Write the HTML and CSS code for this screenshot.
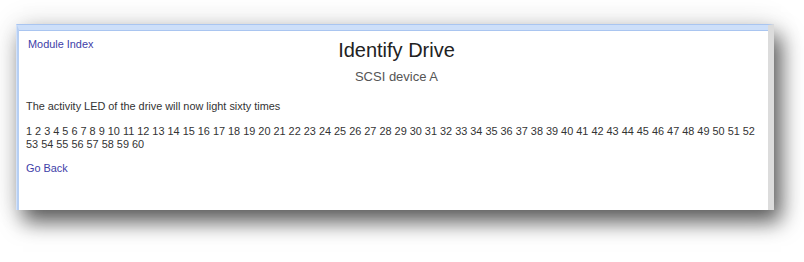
FILE: index.html
```html
<!DOCTYPE html>
<html lang="en">

<head>
    <meta charset="UTF-8">
    <title>Identify Drive</title>
    <link rel="stylesheet" href="styles.css">
</head>

<body>
    <div class="window">
        <div class="page">
            <!-- Header -->
            <div class="header">
                <div class="header-left">
                    <a href="#">Module Index</a>
                </div>
                <div class="header-title">
                    <h1>Identify Drive</h1>
                    <div class="subtitle">SCSI device A</div>
                </div>
                <div class="header-right"></div>
            </div>

            <p class="message">The activity LED of the drive will now light sixty times</p>

            <p class="counter" id="counter"></p>

            <a class="back" href="#">Go Back</a>
        </div>
    </div>

    <script>
        // Fill the counter line
        const nums = [];
        for (let i = 1; i <= 60; i++) {
            nums.push(i);
        }
        document.getElementById('counter').textContent = nums.join(' ');
    </script>
</body>

</html>
```

FILE: styles.css
```css
html {
    background: #ffffff;
}

body {
    margin: 0;
    padding: 24px 0 53px 16px;
    font-family: "Liberation Sans", Arial, sans-serif;
    font-size: 10.9px;
    color: #333;
}

a {
    color: #4040a8;
    text-decoration: none;
}

/* Window frame */
.window {
    width: 751px;
    background: white;
    border-top: 1px solid #a9c5f0;
    border-left: 1px solid #d3e2f9;
    border-right: 6px solid #dcdcdc;
    box-shadow: 0 0 28px rgba(0, 0, 0, 0.12), 7px 12px 20px rgba(0, 0, 0, 0.62);
}

.page {
    border-top: 5px solid #cddff9;
    border-left: 2px solid #b7cff3;
    padding: 8px 1px 35px 7px;
    box-shadow: inset 0 1px 0 #a9c5f0;
}

/* Header */
.header {
    display: grid;
    grid-template-columns: 1fr auto 1fr;
}

.header-left {
    padding-left: 2px;
    line-height: 13px;
}

.header-title {
    text-align: center;
}

h1 {
    margin: 0;
    font-size: 20px;
    font-weight: normal;
    line-height: 24px;
    color: #222;
}

.subtitle {
    margin-top: 7px;
    font-size: 13px;
    line-height: 16px;
    color: #555;
}

.message {
    margin: 14px 0 0;
    line-height: 14px;
}

.counter {
    margin: 12px 0 0;
    line-height: 13px;
}

.back {
    display: block;
    margin-top: 10px;
    line-height: 14px;
}
```
